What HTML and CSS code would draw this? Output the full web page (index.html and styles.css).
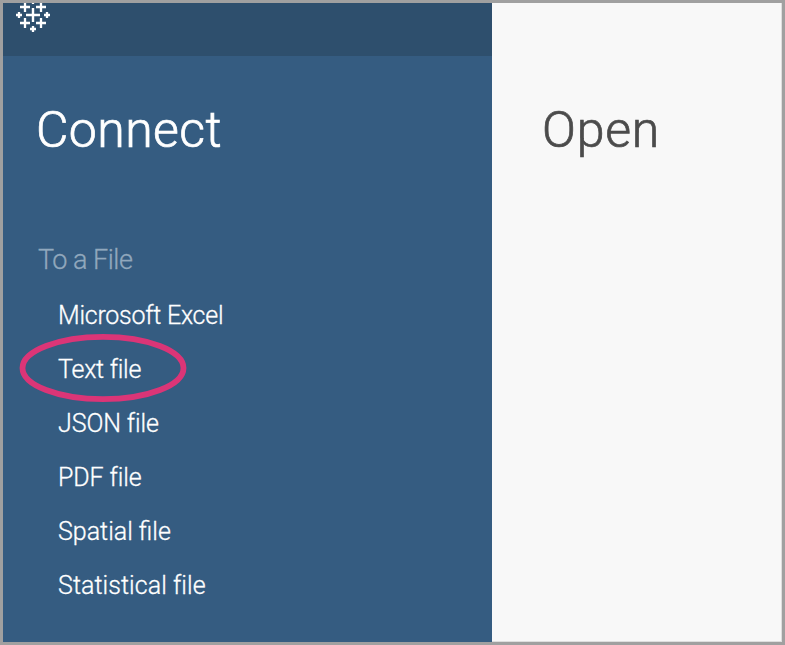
FILE: index.html
```html
<!DOCTYPE html>
<html lang="en">
<head>
<meta charset="utf-8">
<title>Connect</title>
<link rel="stylesheet" href="styles.css">
</head>
<body>
<div class="window">
  <aside class="connect">
    <header class="toolbar">
      <svg class="logo" width="40" height="32" viewBox="13 3 40 32" fill="none" stroke="#fff">
        <path stroke-width="2.4" d="M26 15h14M33 8v14"/>
        <path stroke-width="2.3" d="M20 7h10M25 2v10M36 7h10M41 2v10M20 23h10M25 18v10M36 23h10M41 18v10"/>
        <path stroke-width="2.3" d="M16 15h6M19 12v6M44 15h6M47 12v6M30 29h6M33 26v6M30 1h6M33-2v6"/>
      </svg>
    </header>
    <h1 class="title">Connect</h1>
    <h2 class="group">To a File</h2>
    <ul class="sources">
      <li><span class="excel">Microsoft Excel</span></li>
      <li class="selected"><span class="text">Text file</span>
        <svg class="ring" width="168" height="70" viewBox="0 0 168 70"><ellipse cx="84" cy="35" rx="80.5" ry="31.2"/></svg>
      </li>
      <li><span class="json">JSON file</span></li>
      <li><span class="pdf">PDF file</span></li>
      <li><span class="spatial">Spatial file</span></li>
      <li><span class="stat">Statistical file</span></li>
    </ul>
  </aside>
  <main class="open">
    <h1 class="title">Open</h1>
  </main>
</div>
</body>
</html>
```
FILE: styles.css
```css
* { box-sizing: border-box; }
body { margin: 0; font-family: Roboto, "Liberation Sans", sans-serif; font-weight: 300; }
h1, h2, ul { margin: 0; padding: 0; font-weight: 300; }
.window { display: flex; width: 785px; height: 645px; border: 3px solid #a0a0a0; }
.connect { width: 489px; background: #355c81; color: #fff; }
.toolbar { height: 53px; padding-left: 10px; background: #2e4f6d; }
.logo { display: block; }
.title { font-size: 50px; line-height: 60px; letter-spacing: 0.4px; white-space: nowrap; -webkit-text-stroke: 0.7px currentColor; }
.connect .title { padding: 44px 0 0 33px; }
.group { padding: 84px 0 0 35px; font-size: 27px; line-height: 32px; letter-spacing: -0.5px; color: #91a8bd; white-space: nowrap; -webkit-text-stroke: 0.3px currentColor; }
.sources { padding-top: 13px; list-style: none; font-size: 25px; -webkit-text-stroke: 0.3px currentColor; }
.sources li { position: relative; height: 54px; padding-left: 55px; line-height: 54px; white-space: nowrap; }
.excel, .text { letter-spacing: -0.25px; }
.json, .pdf { letter-spacing: -0.1px; }
.stat { letter-spacing: 0.06px; }
.ring { position: absolute; left: 15.5px; top: -10px; fill: none; stroke: #db3577; stroke-width: 5.8; }
.open { flex: 1; padding: 97px 0 0 50px; background: #f8f8f8; color: #4b4b4b; border-right: 1px solid #dedede; border-bottom: 1px solid #dedede; }
.open .title { letter-spacing: 0.8px; }
```
